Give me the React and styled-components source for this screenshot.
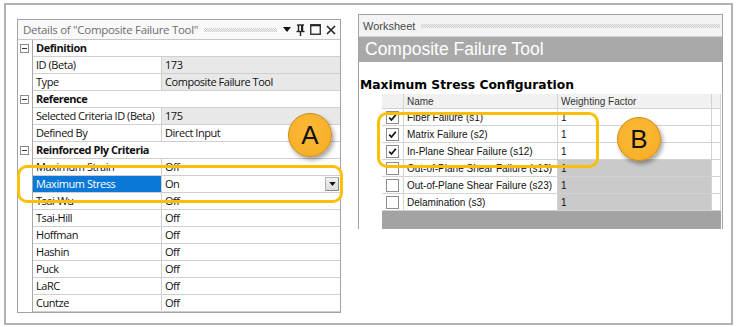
import React from "react";
import styled, { createGlobalStyle } from "styled-components";

const GlobalStyle = createGlobalStyle`
  html, body { margin: 0; padding: 0; background: #ffffff; }
  body { font-family: "Open Sans", "Liberation Sans", sans-serif; }
  * { box-sizing: border-box; }
`;

const Frame = styled.div`
  position: relative;
  margin: 3px 0 0 4px;
  width: 729px;
  height: 322px;
  border: 2px solid #b3b3b3;
  display: flex;
  align-items: flex-start;
  padding-left: 11px;
`;

/* ---------- Details panel ---------- */
const DetailsPanel = styled.div`
  margin-top: 14px;
  width: 324px;
  border: 1px solid #a3a3a3;
  background: #fff;
`;

const grip = `
  background-image: conic-gradient(#c9c9c9 25%, transparent 0 50%, #c9c9c9 0 75%, transparent 0);
  background-size: 2px 2px;
`;

const DetailsTitle = styled.div`
  height: 20px;
  display: flex;
  align-items: center;
  padding: 0 4px 0 5px;
  border-bottom: 1px solid #c6c6c6;
  background: #f9f9f9;
  font-family: "Open Sans", sans-serif;
  font-size: 11.5px;
  letter-spacing: -0.3px;
  color: #6e6e6e;
  white-space: nowrap;
`;

const Grip = styled.div`
  flex: 1;
  height: 4px;
  margin: 1px ${(p) => p.$right || 6}px 0 6px;
  ${grip}
`;

const TitleIcons = styled.div`
  display: flex;
  align-items: center;
  gap: 5px;
`;

const Row = styled.div`
  display: grid;
  grid-template-columns: 15px 129px 1fr;
  height: 17px;
  font-family: "Open Sans", sans-serif;
  font-size: 11px;
  letter-spacing: -0.45px;
  color: #111;
`;

const Gutter = styled.div`
  border-right: 1px solid #a8a8a8;
  display: flex;
  align-items: center;
  justify-content: center;
  padding-right: 1px;
`;

const MinusBox = styled.div`
  width: 9px;
  height: 9px;
  border: 1px solid #8c8c8c;
  background: #fff;
  display: flex;
  align-items: center;
  justify-content: center;
  &::after {
    content: "";
    width: 5px;
    height: 1px;
    background: #333;
  }
`;

const Cell = styled.div`
  border-bottom: 1px solid #cfcfcf;
  border-right: ${(p) => (p.$divider ? "1px solid #cfcfcf" : "none")};
  background: ${(p) => (p.$selected ? "#0a78d7" : p.$readonly ? "#e8e8e8" : "#fff")};
  color: ${(p) => (p.$selected ? "#fff" : "#111")};
  font-weight: ${(p) => (p.$bold ? 700 : 400)};
  grid-column: ${(p) => (p.$span ? "2 / 4" : "auto")};
  display: flex;
  align-items: center;
  justify-content: space-between;
  padding-left: 3px;
  line-height: 16px;
  white-space: nowrap;
  overflow: hidden;
`;

const DropButton = styled.div`
  width: 14px;
  height: 14px;
  margin-right: 1px;
  background: linear-gradient(#f2f2f2, #dcdcdc);
  border: 1px solid #b4b4b4;
  border-right-color: #8a8a8a;
  border-bottom-color: #8a8a8a;
  display: flex;
  align-items: center;
  justify-content: center;
`;

/* ---------- Worksheet panel ---------- */
const WorksheetPanel = styled.div`
  margin-top: 9px;
  margin-left: 17px;
  width: 365px;
  height: 215px;
  border: 1px solid #a3a3a3;
  border-bottom: none;
  display: flex;
  flex-direction: column;
  background: #fff;
`;

const WsTitle = styled.div`
  height: 22px;
  display: flex;
  align-items: center;
  padding-left: 4px;
  background: #f3f3f3;
  border-bottom: 1px solid #d2d2d2;
  font-family: "Liberation Sans", sans-serif;
  font-size: 11px;
  color: #4a4a4a;
`;

const Banner = styled.div`
  height: 25px;
  display: flex;
  align-items: center;
  padding-left: 6px;
  background: #a9a9a9;
  color: #ffffff;
  font-family: "Liberation Sans", sans-serif;
  font-size: 17.5px;
`;

const ConfigTitle = styled.div`
  padding: 16px 0 0 1px;
  height: 32px;
  font-family: "DejaVu Sans", sans-serif;
  font-weight: 700;
  font-size: 12.3px;
  line-height: 15px;
  color: #000;
  white-space: nowrap;
`;

const Table = styled.div`
  margin-left: 23px;
  width: 339px;
  display: grid;
  grid-template-columns: 22px 154px 154px 9px;
  font-family: "Liberation Sans", sans-serif;
  font-size: 10px;
  color: #111;
`;

const TCell = styled.div`
  height: ${(p) => (p.$header ? 15 : 17)}px;
  border-right: 1px solid #d3d3d3;
  border-bottom: 1px solid #d3d3d3;
  background: ${(p) => (p.$header ? "#f1f1f1" : p.$gray ? "#cacaca" : "#fff")};
  display: flex;
  align-items: center;
  justify-content: ${(p) => (p.$center ? "center" : "flex-start")};
  padding-left: ${(p) => (p.$center ? 0 : 3)}px;
  white-space: nowrap;
  overflow: hidden;
  color: ${(p) => (p.$header ? "#333" : "#111")};
`;

const Box = styled.div`
  width: 13px;
  height: 13px;
  border: 1px solid #8d8d8d;
  background: #fff;
  display: flex;
  align-items: center;
  justify-content: center;
`;

const BottomBand = styled.div`
  margin-left: 23px;
  width: 339px;
  height: 18px;
  background: #a3a3a3;
`;

/* ---------- Annotations ---------- */
const Highlight = styled.div`
  position: absolute;
  left: ${(p) => p.$x}px;
  top: ${(p) => p.$y}px;
  width: ${(p) => p.$w}px;
  height: ${(p) => p.$h}px;
  border: 3px solid #fbbf0a;
  border-radius: 10px;
  pointer-events: none;
`;

const Badge = styled.div`
  position: absolute;
  left: ${(p) => p.$x}px;
  top: ${(p) => p.$y}px;
  width: 44px;
  height: 44px;
  border-radius: 50%;
  background: radial-gradient(circle at 45% 40%, #fcb935 0%, #f8b02a 70%, #eea21c 100%);
  border: 1px solid #c98d12;
  box-shadow: 2px 3px 4px rgba(0, 0, 0, 0.35);
  display: flex;
  align-items: center;
  justify-content: center;
  font-family: "Liberation Sans", sans-serif;
  font-size: 26px;
  color: #111;
  padding-top: 1px;
`;

const details = [
  { type: "cat", name: "Definition" },
  { name: "ID (Beta)", value: "173", ro: true },
  { name: "Type", value: "Composite Failure Tool", ro: true },
  { type: "cat", name: "Reference" },
  { name: "Selected Criteria ID (Beta)", value: "175", ro: true },
  { name: "Defined By", value: "Direct Input" },
  { type: "cat", name: "Reinforced Ply Criteria" },
  { name: "Maximum Strain", value: "Off" },
  { name: "Maximum Stress", value: "On", selected: true },
  { name: "Tsai-Wu", value: "Off" },
  { name: "Tsai-Hill", value: "Off" },
  { name: "Hoffman", value: "Off" },
  { name: "Hashin", value: "Off" },
  { name: "Puck", value: "Off" },
  { name: "LaRC", value: "Off" },
  { name: "Cuntze", value: "Off" },
];

const criteria = [
  { name: "Fiber Failure (s1)", on: true },
  { name: "Matrix Failure (s2)", on: true },
  { name: "In-Plane Shear Failure (s12)", on: true },
  { name: "Out-of-Plane Shear Failure (s13)", on: false },
  { name: "Out-of-Plane Shear Failure (s23)", on: false },
  { name: "Delamination (s3)", on: false },
];

const Tri = ({ w = 8, h = 5 }) => (
  <svg width={w} height={h} viewBox="0 0 8 5">
    <path d="M0 0 H8 L4 5 Z" fill="#111" />
  </svg>
);

const PinIcon = () => (
  <svg width="9" height="12" viewBox="0 0 9 12">
    <path d="M1 1 H8" stroke="#222" strokeWidth="1.4" />
    <path d="M2.5 1 V7 M6.5 1 V7" stroke="#222" strokeWidth="1.4" />
    <rect x="5" y="1" width="2" height="6" fill="#222" />
    <path d="M0.5 7.5 H8.5" stroke="#222" strokeWidth="1.4" />
    <path d="M4.5 8 V12" stroke="#222" strokeWidth="1.4" />
  </svg>
);

const MaxIcon = () => (
  <svg width="11" height="11" viewBox="0 0 11 11">
    <rect x="0.75" y="0.75" width="9.5" height="9.5" fill="none" stroke="#222" strokeWidth="1.3" />
    <path d="M0.75 1.5 H10.25" stroke="#222" strokeWidth="1.6" />
  </svg>
);

const CloseIcon = () => (
  <svg width="10" height="10" viewBox="0 0 10 10">
    <path d="M1 1 L9 9 M9 1 L1 9" stroke="#222" strokeWidth="1.6" />
  </svg>
);

const Check = () => (
  <svg width="9" height="9" viewBox="0 0 9 9">
    <path d="M1.2 4.6 L3.5 7 L7.8 1.8" fill="none" stroke="#111" strokeWidth="1.7" />
  </svg>
);

export default function App() {
  return (
    <>
      <GlobalStyle />
      <Frame>
        <DetailsPanel>
          <DetailsTitle>
            Details of "Composite Failure Tool"
            <Grip />
            <TitleIcons>
              <Tri />
              <PinIcon />
              <MaxIcon />
              <CloseIcon />
            </TitleIcons>
          </DetailsTitle>
          {details.map((r, i) =>
            r.type === "cat" ? (
              <Row key={i}>
                <Gutter>
                  <MinusBox />
                </Gutter>
                <Cell $span $bold>
                  {r.name}
                </Cell>
              </Row>
            ) : (
              <Row key={i}>
                <Gutter />
                <Cell $divider $selected={r.selected}>
                  {r.name}
                </Cell>
                <Cell $readonly={r.ro}>
                  {r.value}
                  {r.selected && (
                    <DropButton>
                      <Tri w={7} h={4} />
                    </DropButton>
                  )}
                </Cell>
              </Row>
            )
          )}
        </DetailsPanel>

        <WorksheetPanel>
          <WsTitle>
            Worksheet
            <Grip $right={2} />
          </WsTitle>
          <Banner>Composite Failure Tool</Banner>
          <ConfigTitle>Maximum Stress Configuration</ConfigTitle>
          <Table>
            <TCell $header />
            <TCell $header>Name</TCell>
            <TCell $header>Weighting Factor</TCell>
            <TCell $header />
            {criteria.map((c, i) => (
              <React.Fragment key={i}>
                <TCell $center>
                  <Box>{c.on && <Check />}</Box>
                </TCell>
                <TCell>{c.name}</TCell>
                <TCell $gray={!c.on}>1</TCell>
                <TCell />
              </React.Fragment>
            ))}
          </Table>
          <BottomBand />
        </WorksheetPanel>

        <Highlight $x={11} $y={160} $w={326} $h={38} />
        <Highlight $x={371} $y={107} $w={222} $h={56} />
        <Badge $x={282} $y={108}>A</Badge>
        <Badge $x={611} $y={112}>B</Badge>
      </Frame>
    </>
  );
}
